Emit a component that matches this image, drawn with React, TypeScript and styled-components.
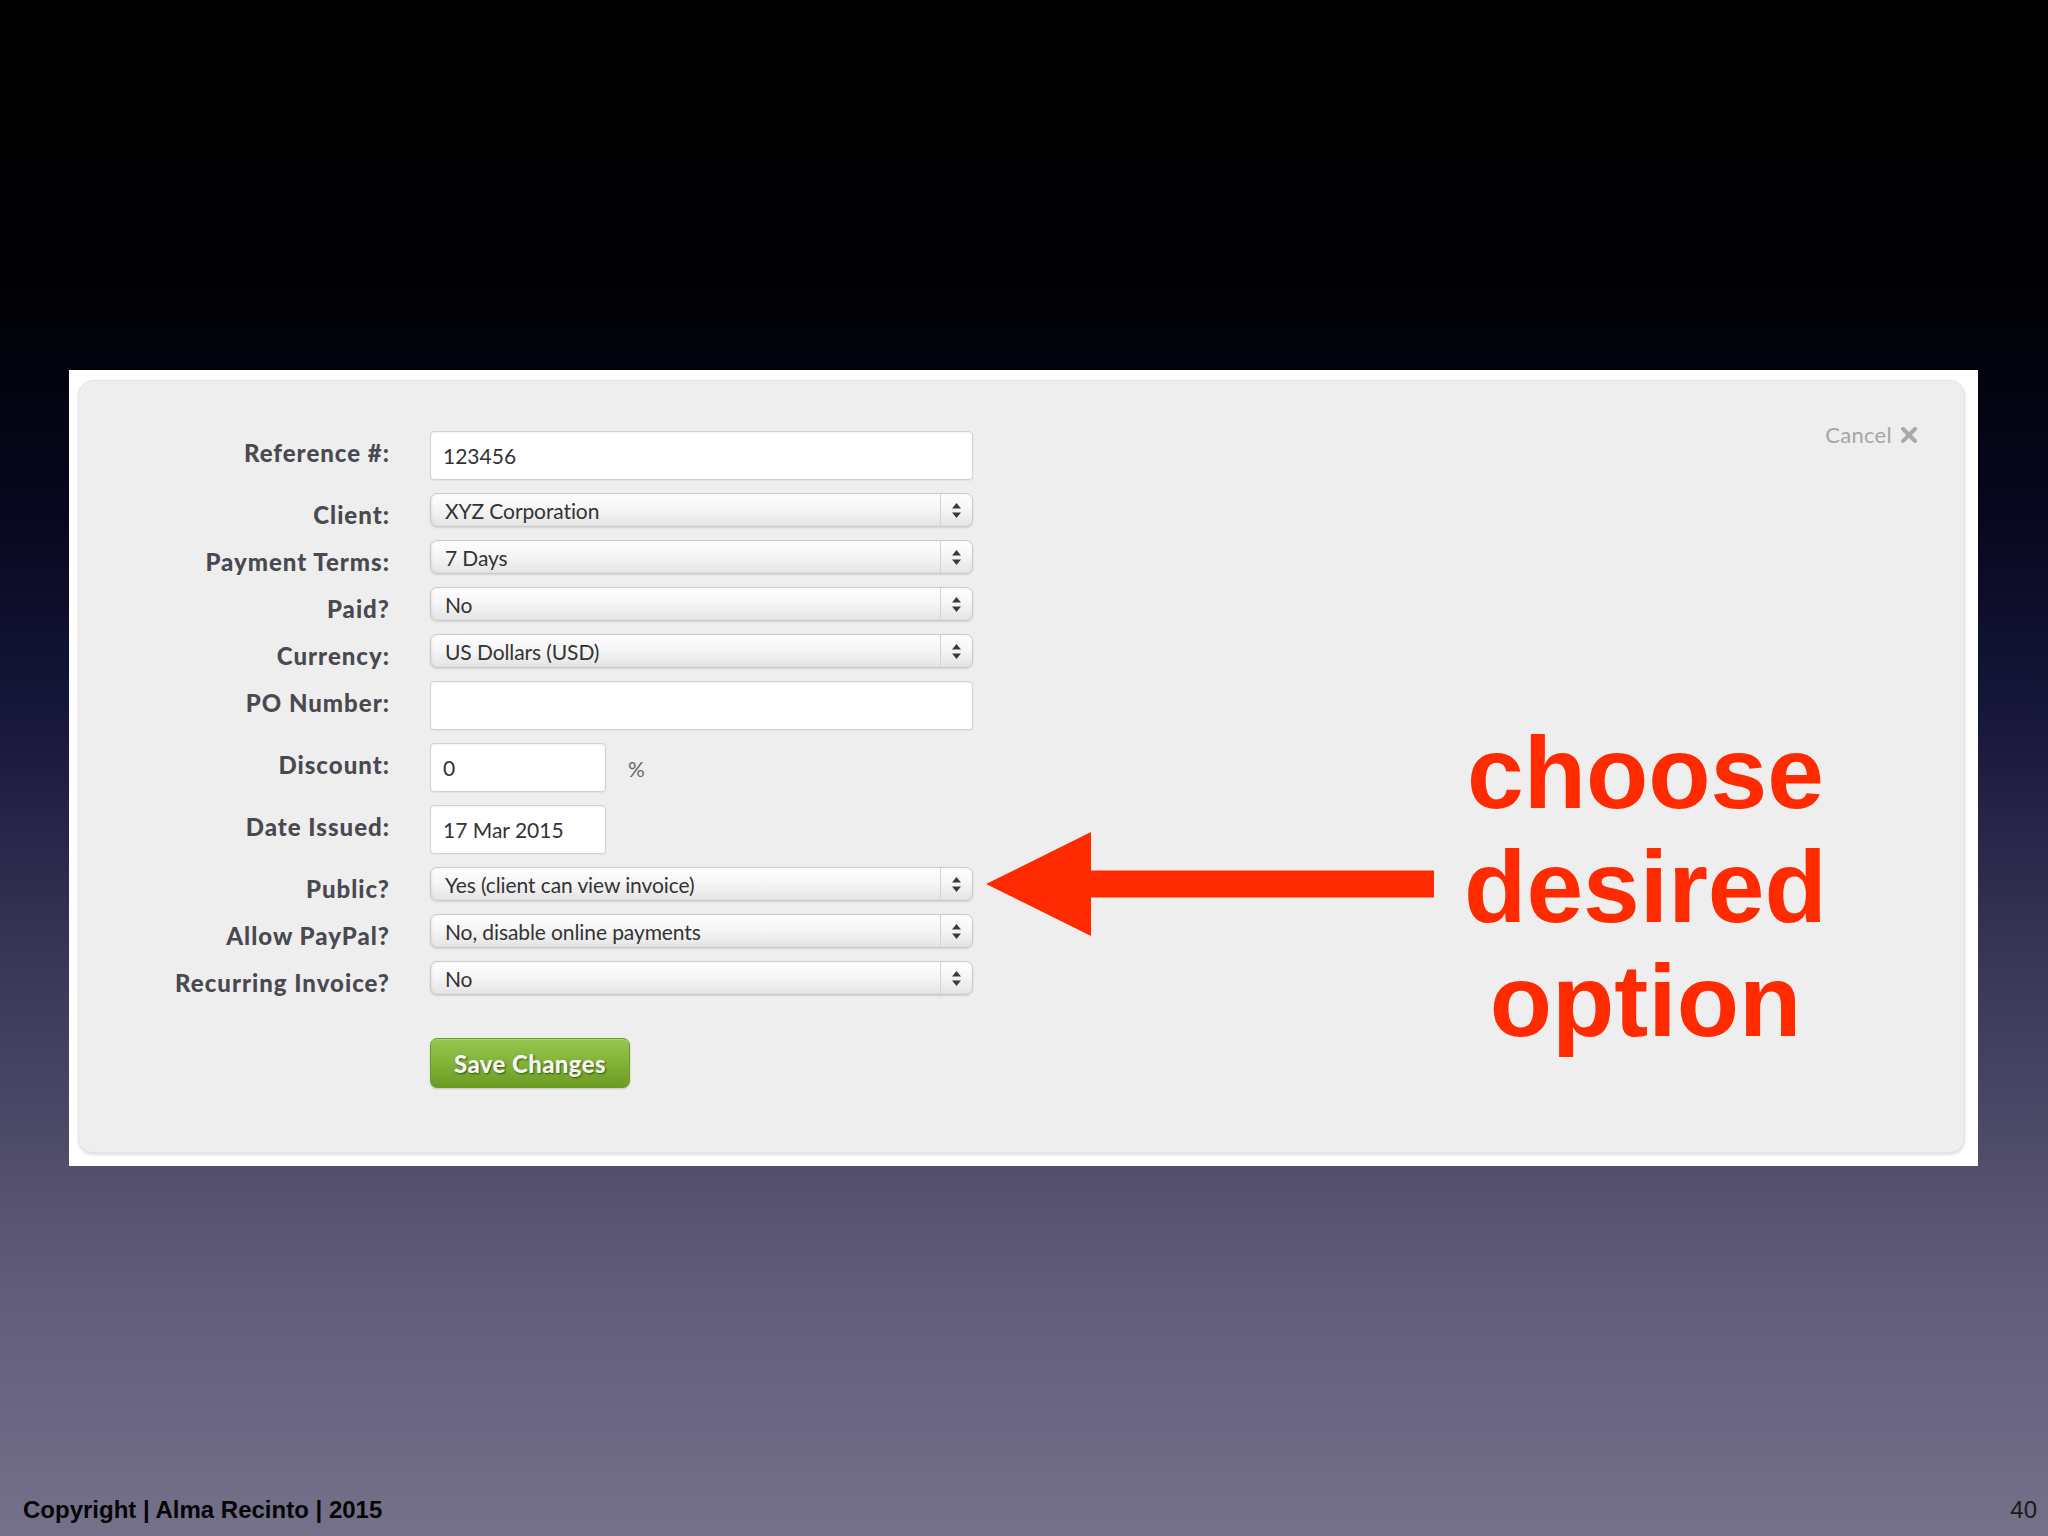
import React from "react";
import styled, { createGlobalStyle } from "styled-components";

const GlobalStyle = createGlobalStyle`
  html, body {
    margin: 0;
    padding: 0;
  }
  body {
    width: 2048px;
    height: 1536px;
    overflow: hidden;
    background: linear-gradient(
      to bottom,
      #000000 0%,
      #010104 18%,
      #07071e 33%,
      #16163a 46%,
      #302d4f 58%,
      #4a4766 72%,
      #615d79 84%,
      #75718b 100%
    );
  }
`;

type FieldKind = "input" | "select" | "discount" | "short";

interface IField {
  label: string;
  kind: FieldKind;
  value: string;
}

const fields: IField[] = [
  { label: "Reference #:", kind: "input", value: "123456" },
  { label: "Client:", kind: "select", value: "XYZ Corporation" },
  { label: "Payment Terms:", kind: "select", value: "7 Days" },
  { label: "Paid?", kind: "select", value: "No" },
  { label: "Currency:", kind: "select", value: "US Dollars (USD)" },
  { label: "PO Number:", kind: "input", value: "" },
  { label: "Discount:", kind: "discount", value: "0" },
  { label: "Date Issued:", kind: "short", value: "17 Mar 2015" },
  { label: "Public?", kind: "select", value: "Yes (client can view invoice)" },
  { label: "Allow PayPal?", kind: "select", value: "No, disable online payments" },
  { label: "Recurring Invoice?", kind: "select", value: "No" },
];

const SelectArrows = () => (
  <svg width="9" height="15" viewBox="0 0 9 15">
    <polygon points="4.5,0 9,5.5 0,5.5" fill="#3a3a3a" />
    <polygon points="0,9.5 9,9.5 4.5,15" fill="#3a3a3a" />
  </svg>
);

const CloseIcon = () => (
  <svg width="16" height="16" viewBox="0 0 16 16">
    <path d="M2 2 L14 14 M14 2 L2 14" stroke="#a9a9a9" strokeWidth="4" strokeLinecap="square" />
  </svg>
);

const Arrow = () => (
  <ArrowSvg width="448" height="104" viewBox="0 0 448 104">
    <polygon points="0,52 105,0 105,38.5 448,38.5 448,65.5 105,65.5 105,104" fill="#ff2a00" />
  </ArrowSvg>
);

const renderControl = (field: IField) => {
  switch (field.kind) {
    case "select":
      return (
        <SelectBox>
          <SelectValue>{field.value}</SelectValue>
          <SelectButton>
            <SelectArrows />
          </SelectButton>
        </SelectBox>
      );
    case "discount":
      return (
        <InlineGroup>
          <TextInput readOnly value={field.value} $short />
          <Percent>%</Percent>
        </InlineGroup>
      );
    case "short":
      return <TextInput readOnly value={field.value} $short />;
    default:
      return <TextInput readOnly value={field.value} />;
  }
};

export default function App() {
  return (
    <>
      <GlobalStyle />
      <Slide>
        <Shot>
          <Card>
            <Form>
              {fields.map((field) => (
                <React.Fragment key={field.label}>
                  <Label>{field.label}</Label>
                  {renderControl(field)}
                </React.Fragment>
              ))}
              <SaveButton type="button">Save Changes</SaveButton>
            </Form>
            <Aside>
              <Cancel>
                Cancel <CloseIcon />
              </Cancel>
            </Aside>
            <Annotation>
              <Arrow />
              <Callout>
                choose
                <br />
                desired
                <br />
                option
              </Callout>
            </Annotation>
          </Card>
        </Shot>
        <Footer>
          <Copyright>Copyright | Alma Recinto | 2015</Copyright>
          <PageNumber>40</PageNumber>
        </Footer>
      </Slide>
    </>
  );
}

const Slide = styled.div`
  width: 2048px;
  height: 1536px;
  box-sizing: border-box;
  padding-top: 370px;
  display: flex;
  flex-direction: column;
`;

const Shot = styled.div`
  margin-left: 69px;
  width: 1909px;
  box-sizing: border-box;
  padding: 10px 13px 13px 9px;
  background: #ffffff;
`;

const Card = styled.div`
  position: relative;
  display: flex;
  background: #eeeeef;
  border: 1px solid #e4e4e6;
  border-radius: 15px;
  box-shadow: 0 2px 3px rgba(0, 0, 0, 0.13);
  padding: 50px 0 64px 0;
`;

const Form = styled.div`
  display: grid;
  grid-template-columns: 311px 543px;
  column-gap: 40px;
  row-gap: 13px;
  align-items: start;
`;

const Label = styled.div`
  height: 34px;
  box-sizing: border-box;
  padding-top: 8px;
  text-align: right;
  font-family: Lato, "Noto Sans", sans-serif;
  font-weight: 900;
  font-size: 24px;
  line-height: 28px;
  color: #4a494f;
  letter-spacing: 1px;
  white-space: nowrap;
`;

const TextInput = styled.input<{ $short?: boolean }>`
  box-sizing: border-box;
  width: ${(p) => (p.$short ? "176px" : "543px")};
  height: 49px;
  margin: 0;
  padding: 0 12px;
  border: 1px solid #d2d2d4;
  border-radius: 4px;
  background: #ffffff;
  box-shadow: inset 0 1px 2px rgba(0, 0, 0, 0.06), 0 1px 1px rgba(0, 0, 0, 0.05);
  font-family: Lato, "Noto Sans", sans-serif;
  font-size: 21px;
  color: #333333;
  outline: none;
`;

const InlineGroup = styled.div`
  display: flex;
  align-items: center;
  gap: 22px;
`;

const Percent = styled.span`
  font-family: Lato, "Noto Sans", sans-serif;
  font-size: 21px;
  color: #6a6a6a;
  padding-top: 2px;
`;

const SelectBox = styled.div`
  box-sizing: border-box;
  width: 543px;
  height: 34px;
  display: flex;
  align-items: stretch;
  border: 1px solid #cbcbcd;
  border-radius: 7px;
  background: linear-gradient(to bottom, #fefefe 0%, #f6f6f6 45%, #e4e4e5 100%);
  box-shadow: 0 1px 2px rgba(0, 0, 0, 0.12), inset 1px 0 2px rgba(0, 0, 0, 0.08);
`;

const SelectValue = styled.div`
  flex: 1;
  display: flex;
  align-items: center;
  padding-left: 14px;
  font-family: Lato, "Noto Sans", sans-serif;
  font-size: 21px;
  color: #333333;
  letter-spacing: -0.1px;
  white-space: nowrap;
`;

const SelectButton = styled.div`
  width: 31px;
  display: flex;
  align-items: center;
  justify-content: center;
  border-left: 1px solid #d4d4d6;
`;

const SaveButton = styled.button`
  grid-column: 2;
  justify-self: start;
  margin-top: 30px;
  width: 200px;
  height: 50px;
  padding: 0;
  border: 1px solid #6b9b24;
  border-radius: 7px;
  background: linear-gradient(to bottom, #97c54f 0%, #84b53a 45%, #6c9c22 100%);
  box-shadow: 0 1px 2px rgba(0, 0, 0, 0.18), inset 0 1px 0 rgba(255, 255, 255, 0.25);
  font-family: Lato, "Noto Sans", sans-serif;
  font-weight: 900;
  font-size: 24px;
  color: #f4f7f0;
  text-shadow: 1px 1px 2px rgba(0, 0, 0, 0.55);
  letter-spacing: 0.4px;
  cursor: pointer;
`;

const Aside = styled.div`
  flex: 1;
  display: flex;
  justify-content: flex-end;
  align-items: flex-start;
  padding: 0 47px 0 0;
  margin-top: -10px;
`;

const Cancel = styled.div`
  display: flex;
  align-items: center;
  gap: 9px;
  font-family: Lato, "Noto Sans", sans-serif;
  font-size: 22px;
  color: #a6a6a6;
  letter-spacing: 0.3px;
`;

const Annotation = styled.div`
  position: absolute;
  left: 907px;
  top: 335px;
  display: flex;
  align-items: flex-start;
  gap: 30px;
`;

const ArrowSvg = styled.svg`
  display: block;
  margin-top: 116px;
  flex: none;
`;

const Callout = styled.div`
  font-family: "Liberation Sans", Arial, sans-serif;
  font-weight: 700;
  font-size: 102px;
  line-height: 114px;
  color: #ff2a00;
  text-align: center;
  min-width: 363px;
`;

const Footer = styled.div`
  margin-top: auto;
  display: flex;
  justify-content: space-between;
  align-items: baseline;
  padding: 0 11px 12px 23px;
  font-family: "Liberation Sans", Arial, sans-serif;
  font-size: 24px;
  line-height: 28px;
`;

const Copyright = styled.span`
  font-weight: 700;
  color: #050505;
`;

const PageNumber = styled.span`
  color: #1a1a1a;
`;
